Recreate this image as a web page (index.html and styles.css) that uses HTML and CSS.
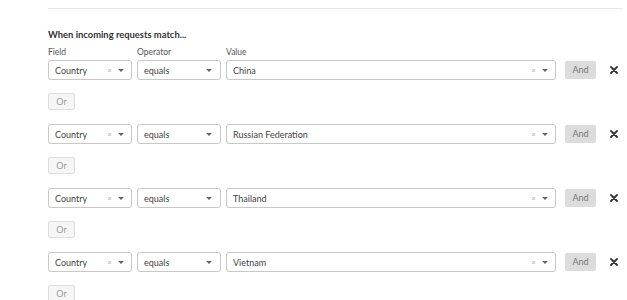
FILE: index.html
```html
<!DOCTYPE html>
<html lang="en">
<head>
    <meta charset="UTF-8">
    <title>Rule builder</title>
    <link rel="stylesheet" href="styles.css">
</head>
<body>
    <div class="rule-panel">
        <div class="divider"></div>
        <h4 class="title">When incoming requests match...</h4>
        <div class="labels">
            <span class="lbl-field">Field</span>
            <span class="lbl-op">Operator</span>
            <span class="lbl-value">Value</span>
        </div>

        <div class="group">
            <div class="row">
                <div class="select field"><span class="txt">Country</span><span class="clear">×</span><span class="caret"></span></div>
                <div class="select op"><span class="txt">equals</span><span class="caret"></span></div>
                <div class="select value"><span class="txt">China</span><span class="clear">×</span><span class="caret"></span></div>
                <button class="and-btn">And</button>
                <svg class="remove" width="8" height="8" viewBox="0 0 8 8"><path d="M1 1L7 7M7 1L1 7" stroke="#333" stroke-width="1.8" stroke-linecap="round"/></svg>
            </div>
            <button class="or-btn">Or</button>
        </div>

        <div class="group">
            <div class="row">
                <div class="select field"><span class="txt">Country</span><span class="clear">×</span><span class="caret"></span></div>
                <div class="select op"><span class="txt">equals</span><span class="caret"></span></div>
                <div class="select value"><span class="txt">Russian Federation</span><span class="clear">×</span><span class="caret"></span></div>
                <button class="and-btn">And</button>
                <svg class="remove" width="8" height="8" viewBox="0 0 8 8"><path d="M1 1L7 7M7 1L1 7" stroke="#333" stroke-width="1.8" stroke-linecap="round"/></svg>
            </div>
            <button class="or-btn">Or</button>
        </div>

        <div class="group">
            <div class="row">
                <div class="select field"><span class="txt">Country</span><span class="clear">×</span><span class="caret"></span></div>
                <div class="select op"><span class="txt">equals</span><span class="caret"></span></div>
                <div class="select value"><span class="txt">Thailand</span><span class="clear">×</span><span class="caret"></span></div>
                <button class="and-btn">And</button>
                <svg class="remove" width="8" height="8" viewBox="0 0 8 8"><path d="M1 1L7 7M7 1L1 7" stroke="#333" stroke-width="1.8" stroke-linecap="round"/></svg>
            </div>
            <button class="or-btn">Or</button>
        </div>

        <div class="group">
            <div class="row">
                <div class="select field"><span class="txt">Country</span><span class="clear">×</span><span class="caret"></span></div>
                <div class="select op"><span class="txt">equals</span><span class="caret"></span></div>
                <div class="select value"><span class="txt">Vietnam</span><span class="clear">×</span><span class="caret"></span></div>
                <button class="and-btn">And</button>
                <svg class="remove" width="8" height="8" viewBox="0 0 8 8"><path d="M1 1L7 7M7 1L1 7" stroke="#333" stroke-width="1.8" stroke-linecap="round"/></svg>
            </div>
            <button class="or-btn">Or</button>
        </div>
    </div>
</body>
</html>
```

FILE: styles.css
```css
* {
    margin: 0;
    padding: 0;
    box-sizing: border-box;
}
body {
    font-family: 'Lato', sans-serif;
    background-color: #fff;
    color: #333;
    overflow: hidden;
}
.rule-panel {
    width: 575px;
    margin-left: 48px;
    padding-top: 8px;
}
.divider {
    height: 1px;
    background-color: #e6e6e6;
}
.title {
    font-size: 9.4px;
    font-weight: bold;
    color: #333;
    margin-top: 19px;
    line-height: 14px;
}
.labels {
    display: flex;
    font-size: 8.5px;
    color: #555;
    margin-top: 5px;
    line-height: 11px;
}
.lbl-field { width: 89px; }
.lbl-op { width: 89px; }
.group {
    margin-top: 2px;
    margin-bottom: 14px;
}
.group:last-child {
    margin-bottom: 0;
}
.row {
    display: flex;
    align-items: center;
    height: 20px;
}
.select {
    display: flex;
    align-items: center;
    height: 20px;
    border: 1px solid #c8c8c8;
    border-radius: 3px;
    padding: 0 6px 0 6px;
    font-size: 9px;
    color: #444;
    margin-right: 5px;
}
.select.field { width: 84px; }
.select.op { width: 84px; }
.select.value { width: 330px; margin-right: 9px; }
.txt {
    flex: 1;
}
.clear {
    font-size: 8px;
    color: #aaa;
    margin-right: 6px;
}
.caret {
    width: 0;
    height: 0;
    border-left: 3px solid transparent;
    border-right: 3px solid transparent;
    border-top: 3px solid #666;
    margin-right: 1px;
}
.op .caret { margin-right: 2px; }
.and-btn {
    width: 31px;
    height: 18px;
    border: none;
    border-radius: 2px;
    background-color: #dcdcdc;
    color: #777;
    font-family: 'Lato', sans-serif;
    font-size: 9px;
    margin-top: -1px;
}
.remove {
    margin-left: 14px;
}
.or-btn {
    display: block;
    width: 27px;
    height: 17px;
    margin-top: 13px;
    border: 1px solid #dedede;
    border-radius: 2px;
    background-color: #f6f6f6;
    color: #999;
    font-family: 'Lato', sans-serif;
    font-size: 9px;
}
```
